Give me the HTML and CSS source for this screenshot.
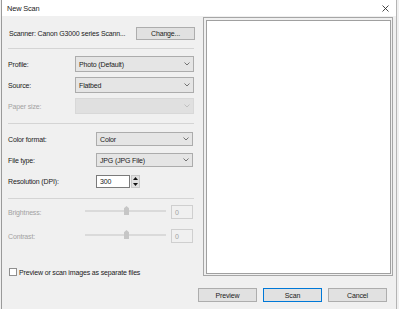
FILE: index.html
```html
<!DOCTYPE html>
<html>
<head>
<meta charset="utf-8">
<link rel="stylesheet" href="styles.css">
</head>
<body>
<div class="window">
  <div class="titlebar">
    <span class="title">New Scan</span>
    <svg class="close" width="7" height="7" viewBox="0 0 7 7"><path d="M0.5 0.5L6.5 6.5M6.5 0.5L0.5 6.5" stroke="#333" stroke-width="0.9" fill="none"/></svg>
  </div>
  <div class="body">
    <div class="main">
      <div class="left">
        <div class="scanner-row">
          <span class="scanner-text">Scanner: Canon G3000 series Scann...</span>
          <div class="btn change">Change...</div>
        </div>
        <div class="sep s1"></div>
        <div class="row r-profile">
          <span class="lbl lbl-a">Profile:</span>
          <div class="combo combo-a"><span>Photo (Default)</span><svg class="chev" width="6" height="4" viewBox="0 0 6 4"><path d="M0.5 0.5L3 3L5.5 0.5" stroke="#555" stroke-width="0.8" fill="none"/></svg></div>
        </div>
        <div class="row r-source">
          <span class="lbl lbl-a">Source:</span>
          <div class="combo combo-a"><span>Flatbed</span><svg class="chev" width="6" height="4" viewBox="0 0 6 4"><path d="M0.5 0.5L3 3L5.5 0.5" stroke="#555" stroke-width="0.8" fill="none"/></svg></div>
        </div>
        <div class="row r-paper">
          <span class="lbl lbl-a disabled">Paper size:</span>
          <div class="combo combo-a combo-disabled"><span></span><svg class="chev" width="6" height="4" viewBox="0 0 6 4"><path d="M0.5 0.5L3 3L5.5 0.5" stroke="#b8b8b8" stroke-width="0.8" fill="none"/></svg></div>
        </div>
        <div class="sep s2"></div>
        <div class="row r-color">
          <span class="lbl lbl-b">Color format:</span>
          <div class="combo combo-b"><span>Color</span><svg class="chev" width="6" height="4" viewBox="0 0 6 4"><path d="M0.5 0.5L3 3L5.5 0.5" stroke="#555" stroke-width="0.8" fill="none"/></svg></div>
        </div>
        <div class="row r-file">
          <span class="lbl lbl-b">File type:</span>
          <div class="combo combo-b"><span>JPG (JPG File)</span><svg class="chev" width="6" height="4" viewBox="0 0 6 4"><path d="M0.5 0.5L3 3L5.5 0.5" stroke="#555" stroke-width="0.8" fill="none"/></svg></div>
        </div>
        <div class="row r-res">
          <span class="lbl lbl-b">Resolution (DPI):</span>
          <div class="textbox res-box">300</div>
          <div class="spinner">
            <div class="spin-half"><svg width="5" height="3" viewBox="0 0 5 3"><path d="M0 3L2.5 0L5 3Z" fill="#111"/></svg></div>
            <div class="spin-half"><svg width="5" height="3" viewBox="0 0 5 3"><path d="M0 0L2.5 3L5 0Z" fill="#111"/></svg></div>
          </div>
        </div>
        <div class="sep s3"></div>
        <div class="row r-bright">
          <span class="lbl lbl-c disabled">Brightness:</span>
          <div class="slider"><div class="track"></div><div class="thumb"></div></div>
          <div class="textbox val-box disabled">0</div>
        </div>
        <div class="row r-contrast">
          <span class="lbl lbl-c disabled">Contrast:</span>
          <div class="slider"><div class="track"></div><div class="thumb"></div></div>
          <div class="textbox val-box disabled">0</div>
        </div>
        <div class="row r-check">
          <div class="checkbox"></div>
          <span class="check-text">Preview or scan images as separate files</span>
        </div>
      </div>
      <div class="preview"><div class="preview-inner"></div></div>
    </div>
    <div class="buttons">
      <div class="btn action">Preview</div>
      <div class="btn action default">Scan</div>
      <div class="btn action">Cancel</div>
    </div>
  </div>
</div>
</body>
</html>
```

FILE: styles.css
```css
* { box-sizing: border-box; }
html, body {
  margin: 0;
  padding: 0;
  width: 399px;
  height: 309px;
  overflow: hidden;
  background: #f0f0f0;
  font-family: "Liberation Sans", Arial, sans-serif;
  font-size: 7px;
  letter-spacing: -0.15px;
  color: #1a1a1a;
  white-space: nowrap;
}
.window {
  margin-left: 1px;
  width: 396px;
  height: 309px;
  border-left: 1px solid #9a9a9a;
  border-right: 1px solid #b4b4b4;
  background: #f0f0f0;
  display: flex;
  flex-direction: column;
}
.titlebar {
  height: 16px;
  background: #ffffff;
  display: flex;
  align-items: center;
  justify-content: space-between;
  padding-left: 5px;
  padding-right: 7px;
  flex: none;
}
.title { font-size: 7.4px; color: #222; }
.close { display: block; }
.body {
  flex: 1;
  display: flex;
  flex-direction: column;
}
.main {
  display: flex;
  padding-top: 1px;
  padding-left: 6px;
}
.left {
  width: 186px;
  display: flex;
  flex-direction: column;
}
.scanner-row {
  margin-top: 10px;
  height: 13px;
  display: flex;
  align-items: center;
  justify-content: space-between;
}
.scanner-text { padding-left: 1px; }
.btn {
  background: #e1e1e1;
  border: 1px solid #adadad;
  display: flex;
  align-items: center;
  justify-content: center;
  color: #1a1a1a;
}
.change { width: 59px; height: 13px; margin-right: -1px; }
.sep {
  height: 1px;
  background: #d4d4d4;
}
.s1 { margin-top: 8px; }
.s2 { margin-top: 9px; }
.s3 { margin-top: 10px; }
.row {
  display: flex;
  align-items: center;
}
.lbl { flex: none; }
.lbl-a { width: 67px; }
.lbl-b { width: 88px; }
.lbl-c { width: 77px; }
.disabled { color: #a2a2a2; }
.combo {
  background: #e5e5e5;
  border: 1px solid #acacac;
  display: flex;
  align-items: center;
  justify-content: space-between;
  padding-left: 3px;
  padding-right: 3px;
}
.chev { display: block; }
.combo-a { width: 119px; height: 16px; }
.combo-b { width: 97px; height: 14px; }
.combo-disabled { background: #e0e0e0; border-color: #d8d8d8; }
.r-profile { margin-top: 7px; }
.r-source { margin-top: 5px; }
.r-paper { margin-top: 5px; }
.r-color { margin-top: 8px; }
.r-file { margin-top: 7px; }
.r-res { margin-top: 8px; }
.r-bright { margin-top: 6px; }
.r-contrast { margin-top: 10px; }
.r-check { margin-top: 25px; padding-left: 1px; }
.textbox {
  background: #ffffff;
  border: 1px solid #7a7a7a;
  display: flex;
  align-items: center;
  padding-left: 3px;
}
.res-box { width: 34px; height: 13px; }
.spinner {
  width: 9px;
  height: 13px;
  margin-left: 1px;
  background: #e0e0e0;
  border: 1px solid #c8c8c8;
  display: flex;
  flex-direction: column;
  justify-content: space-around;
  align-items: center;
}
.spin-half svg { display: block; }
.slider {
  position: relative;
  width: 81px;
  height: 14px;
  margin-right: 5px;
}
.track {
  position: absolute;
  left: 0;
  right: 0;
  top: 5px;
  height: 2px;
  background: #dadada;
}
.thumb {
  position: absolute;
  left: 39px;
  top: 1px;
  width: 5px;
  height: 9px;
  background: #c6c6c6;
  clip-path: polygon(50% 0, 100% 25%, 100% 100%, 0 100%, 0 25%);
}
.val-box {
  width: 22px;
  height: 14px;
  background: #f0f0f0;
  border-color: #cfcfcf;
}
.checkbox {
  width: 8px;
  height: 8px;
  background: #ffffff;
  border: 1px solid #8f8f8f;
  margin-right: 2px;
  flex: none;
}
.preview {
  margin-left: 9px;
  width: 190px;
  height: 259px;
  border: 1px solid #a6a6a6;
  padding: 2px 1px 1px 2px;
  background: #f0f0f0;
}
.preview-inner {
  width: 100%;
  height: 100%;
  border: 1px solid #a0a0a0;
  background: #ffffff;
}
.buttons {
  display: flex;
  justify-content: flex-end;
  gap: 6px;
  margin-top: 12px;
  padding-right: 9px;
}
.action { width: 59px; height: 14px; }
.default { border-color: #0078d7; }
```
